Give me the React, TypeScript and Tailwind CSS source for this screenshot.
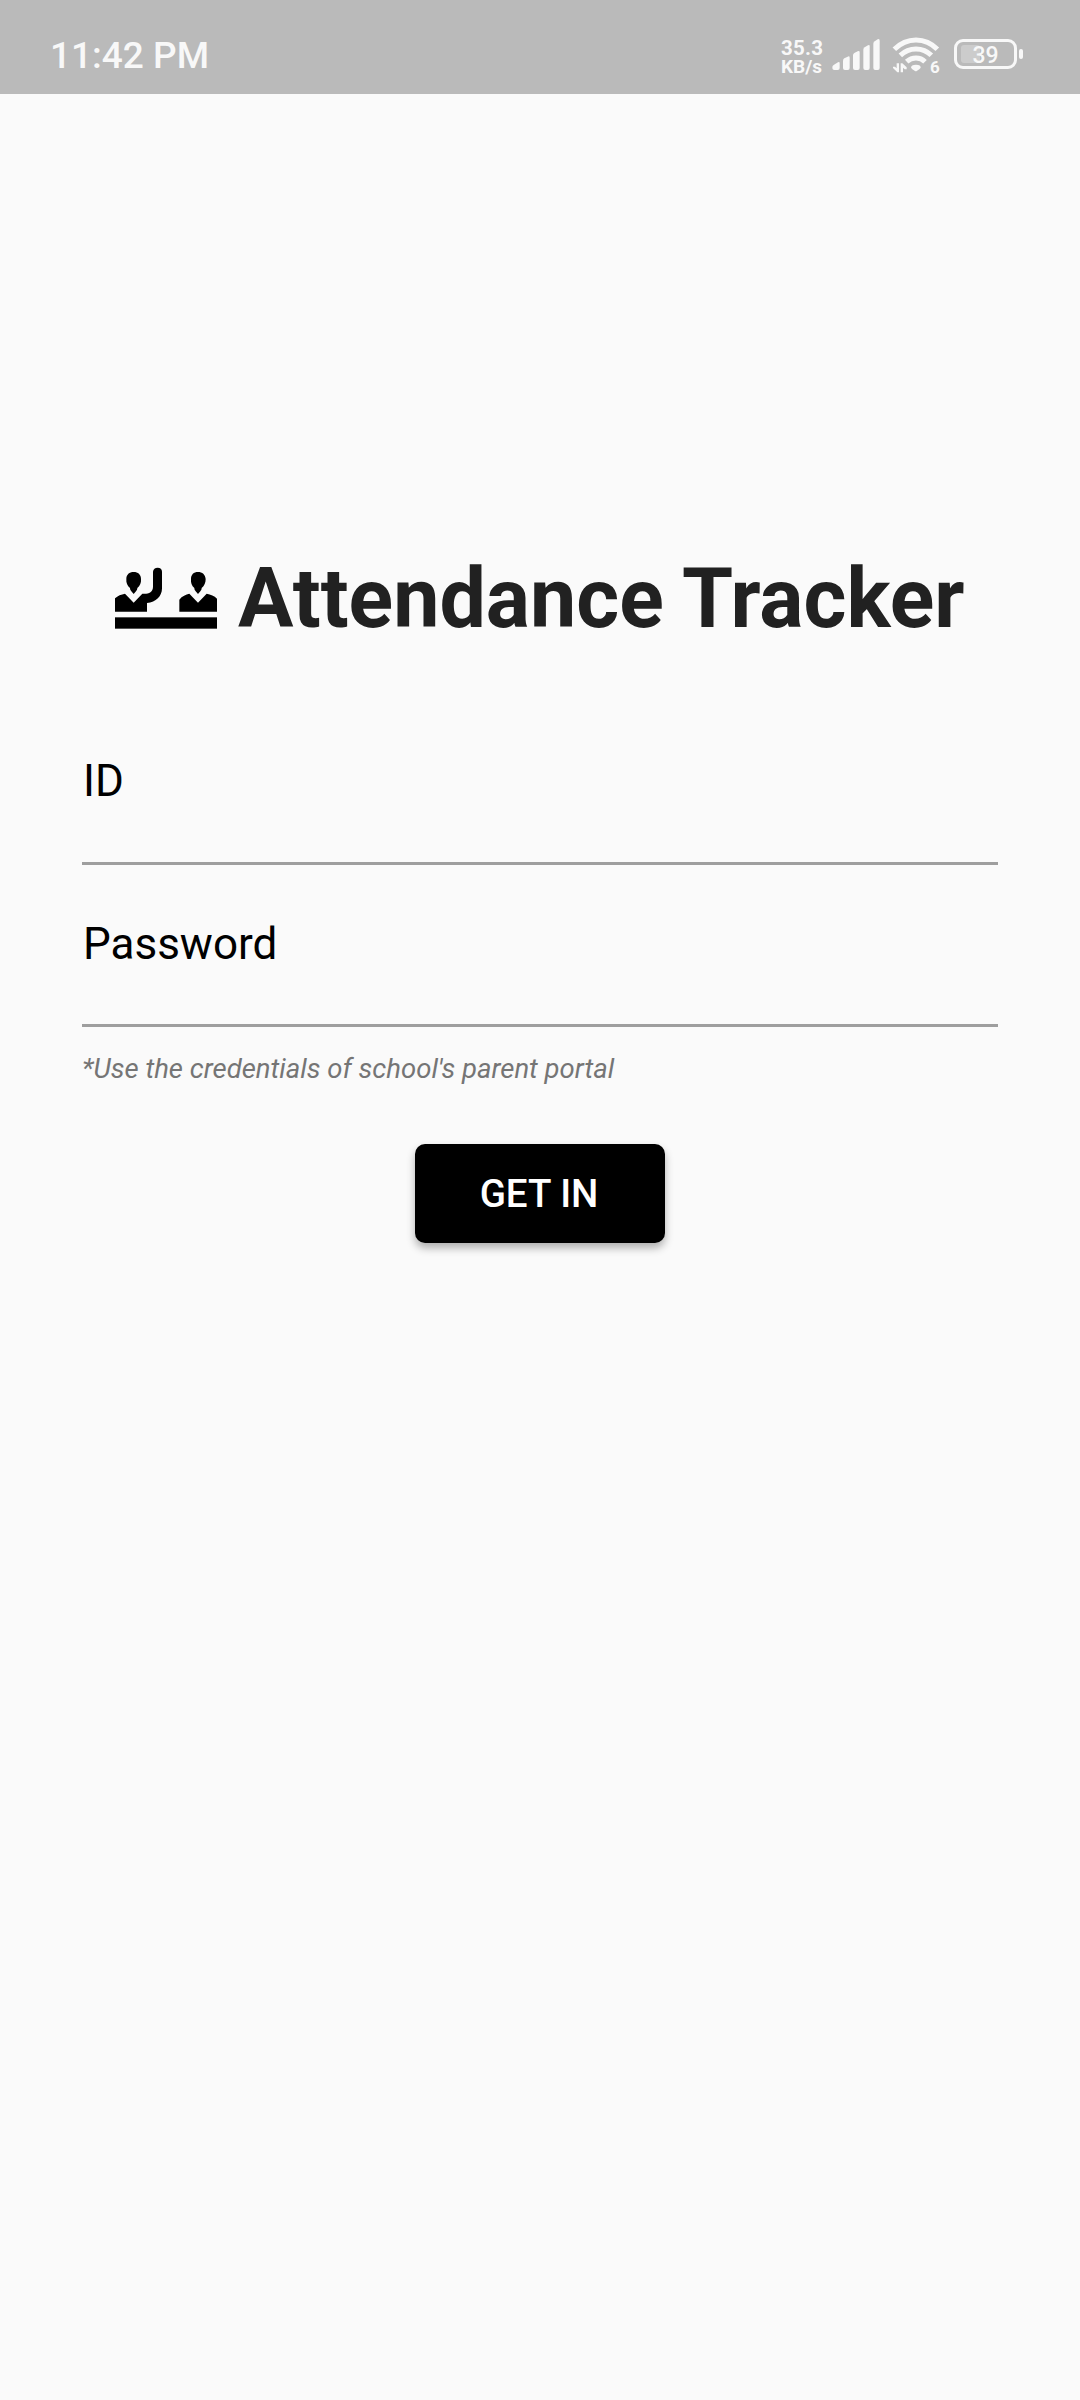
const MeetingIcon = () => (
  <svg className="mt-[18px] h-[62px] w-[102px] shrink-0" viewBox="45 51 306 186" fill="#000">
    <path d="M79 87C79 74 88 66 101 66S123 74 123 87C124 99 120 107 112 114C112 119 110 121 108 124L101 132L94 124C92 121 90 119 90 114C82 107 78 99 79 87Z" />
    <path d="M45 185V145C53 137 64 133 75 131L101 158L127 131C144 133 159 127 159 110V65C160 57 165 53 173 53S186 57 186 65V115C186 139 168 157 141 159V185Z" />
    <path d="M273 87C273 74 281 66 294 66S316 74 317 87C317 99 313 107 305 114C305 119 303 121 301 124L294 132L287 124C285 121 283 119 283 114C275 107 272 99 273 87Z" />
    <path d="M238 185V149C246 138 258 133 268 131L294 158L320 131C332 133 343 137 351 146V185Z" />
    <rect x="45" y="202" width="306" height="34" />
  </svg>
);

const SignalIcon = () => (
  <svg className="ml-[10px] mt-[38px] h-[32px] w-[48px] shrink-0" viewBox="186 54 144 96" fill="#f8f8f8">
    <path d="M187 144Q186 137 192 134L204 127Q209 124 209 130V144Q209 150 203 150H193Q187 150 187 144Z" />
    <path d="M219 144V122Q219 118 223 115L233 110Q239 107 239 113V144Q239 150 233 150H225Q219 150 219 144Z" />
    <path d="M249 144V106Q249 102 253 99L263 94Q269 91 269 97V144Q269 150 263 150H255Q249 150 249 144Z" />
    <path d="M280 144V89Q280 85 284 82L294 76Q299 73 299 79V144Q299 150 293 150H286Q280 150 280 144Z" />
    <path d="M310 144V71Q310 67 314 64L323 58Q329 55 329 62V144Q329 150 323 150H316Q310 150 310 144Z" />
  </svg>
);

const WifiIcon = () => (
  <svg className="h-[36px] w-[48px]" viewBox="36 51 144 108" fill="none" stroke="#f8f8f8">
    <path d="M43 88Q71 60 108 60T172 88" strokeWidth="15" />
    <path d="M61 106Q81 87 108 87T154 106" strokeWidth="15" />
    <path d="M80 125Q92 114 108 114T135 125" strokeWidth="15" />
    <path d="M93 143Q93 134 108 134T122 143Q120 147 110 153Q108 155 105 153Q95 147 93 143Z" fill="#f8f8f8" stroke="none" />
    <path d="M50 130H57V157H52L39 144V140H45L50 145ZM62 130H67L80 142V148H74L69 143V157H62Z" fill="#f8f8f8" stroke="none" />
  </svg>
);

const StatusBar = () => (
  <header className="flex h-[94px] w-full bg-[#bababa] font-medium text-[#f8f8f8]">
    <span className="ml-[50px] mt-[34px] h-[44px] w-[731px] whitespace-nowrap text-[37px] leading-[44px]">11:42 PM</span>
    <div className="mt-[38px] w-[41px] shrink-0 whitespace-nowrap font-bold">
      <div className="text-[20.5px] leading-[20px] tracking-[0.3px]">35.3</div>
      <div className="text-[19px] leading-[18px]">KB/s</div>
    </div>
    <SignalIcon />
    <div className="relative ml-[12px] mt-[37px] h-[36px] w-[48px] shrink-0">
      <WifiIcon />
      <span className="absolute left-[38px] top-[20px] text-[17px] font-bold leading-[20px]">6</span>
    </div>
    <div className="relative ml-[14px] mt-[39px] flex h-[30px] w-[63px] shrink-0 justify-center rounded-[9px] border-[3px] border-[#f8f8f8]">
      <span className="absolute left-[4px] top-[3px] h-[18px] w-[19px] rounded-[3px] bg-[#cccccc]" />
      <span className="relative mt-px text-[23px] font-medium leading-[26px]">39</span>
    </div>
    <span className="ml-[2px] mt-[49px] h-[10px] w-[4px] shrink-0 rounded-[2px] bg-[#f8f8f8]" />
  </header>
);

const Field = ({ label, type }: { label: string; type: string }) => (
  <label className="flex h-[110px] flex-col last:h-[110px] first:h-[111px]">
    <span className="h-[54px] shrink-0 pl-px text-[44px] leading-[54px]">{label}</span>
    <input type={type} className="min-h-0 w-full flex-1 border-b-[3px] border-[#9e9e9e] bg-transparent text-[40px] outline-none" />
  </label>
);

export default function App() {
  return (
    <main className="flex h-[2400px] w-[1080px] flex-col overflow-hidden bg-[#fafafa] font-['Roboto',sans-serif] text-black">
      <StatusBar />
      <h1 className="mt-[455px] flex h-[98px] whitespace-nowrap pl-[115px] text-[82.5px] font-bold leading-[98px] text-[#212121]">
        <MeetingIcon />
        <span className="ml-[21px] pt-px">Attendance Tracker</span>
      </h1>
      <form className="mt-[107px] flex flex-col px-[82px]" onSubmit={(e) => e.preventDefault()}>
        <div className="flex flex-col gap-[52px]">
          <Field label="ID" type="text" />
          <Field label="Password" type="password" />
        </div>
        <p className="mt-[26px] h-[32px] whitespace-nowrap text-[27.5px] italic leading-[32px] text-[#757575]">
          *Use the credentials of school's parent portal
        </p>
        <button className="mt-[59px] h-[99px] w-[250px] self-center rounded-[10px] bg-black pr-[2px] text-[38.5px] font-medium leading-[46px] text-white shadow-[0_5px_8px_rgba(0,0,0,0.3)]">
          GET IN
        </button>
      </form>
    </main>
  );
}
